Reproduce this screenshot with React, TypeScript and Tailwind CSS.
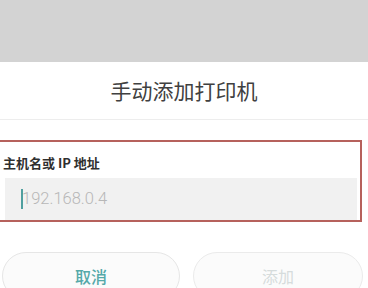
export default function App() {
  return (
    <div
      className="w-[368px] h-[288px] overflow-hidden bg-white"
      style={{ fontFamily: '"Noto Sans CJK SC", "Noto Sans", sans-serif' }}
    >
      {/* Dimmed backdrop */}
      <div className="h-[62px] bg-[#d3d3d3]" />

      {/* Title */}
      <div className="h-[57px] flex items-center justify-center text-[21px] text-[#404040]">
        手动添加打印机
      </div>
      <div className="h-px bg-[#ededed]" />

      {/* Highlighted field */}
      <div className="mt-[20px] -ml-[4px] w-[366px] h-[82px] border-2 border-[#b6615c] pl-[5px] pr-[3px]">
        <div className="pt-[12px] text-[13px] leading-[18px] font-bold text-[#2f2f2f]">
          主机名或 IP 地址
        </div>
        <div className="mt-[6px] ml-[2px] h-[42px] bg-[#f1f1f1] flex items-center pl-[16px]">
          <span className="w-[2px] h-[20px] bg-[#4f9f9f]" />
          <span
            className="text-[16.5px] font-light text-[#b7b7b7] -ml-px"
            style={{ fontFamily: 'Roboto, "Noto Sans", sans-serif' }}
          >
            192.168.0.4
          </span>
        </div>
      </div>

      {/* Buttons */}
      <div className="mt-[30px] flex gap-[13px] pl-[2px] pr-[5px]">
        <button className="w-[178px] h-[48px] rounded-full border border-[#e6e6e6] bg-[#fbfbfb] text-[16px] text-[#55a9a9] font-medium">
          取消
        </button>
        <button className="flex-1 h-[48px] rounded-full border border-[#ebebeb] bg-[#fbfbfb] text-[16px] text-[#d6dcdc]">
          添加
        </button>
      </div>
    </div>
  )
}
